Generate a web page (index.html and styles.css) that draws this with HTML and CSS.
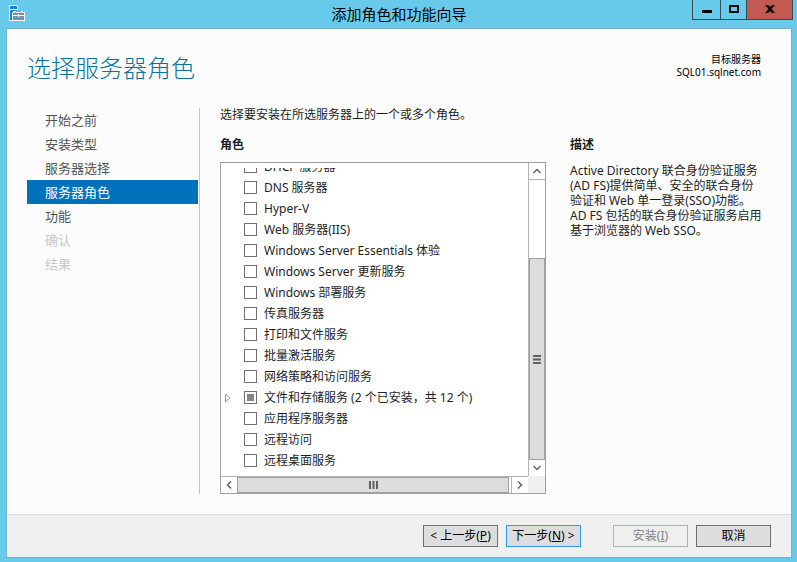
FILE: index.html
```html
<!DOCTYPE html>
<html lang="zh-CN">
<head>
<meta charset="utf-8">
<title>添加角色和功能向导</title>
<link rel="stylesheet" href="styles.css">
</head>
<body>
<div class="window">
  <header class="titlebar">
    <svg class="app-icon" width="16" height="16" viewBox="0 0 16 16" aria-hidden="true">
      <path fill="#fff" d="M0 0h9v6h4l1 1h2v9H0z"/>
      <path fill="#1c83d6" d="M1 1h7v3H1zM1 5h7v1H5L3 8v7H1z"/>
      <path fill="#7890ab" d="M4 8h11v7H4z"/>
      <path fill="none" stroke="#7890ab" d="M6.500 8V7.500l1-1h4l1 1V8"/>
      <path fill="#fff" d="M4 10h5V9h1v1h5v1h-5v1H9v-1H4z"/>
    </svg>
    <h1 class="caption">添加角色和功能向导</h1>
    <div class="window-buttons">
      <button class="win-btn minimize" type="button" aria-label="最小化"><svg width="10" height="10" viewBox="0 0 10 10"><path d="M0 6h10v3H0z"/></svg></button>
      <button class="win-btn maximize" type="button" aria-label="最大化"><svg width="10" height="10" viewBox="0 0 10 10"><path fill="none" stroke="#000" stroke-width="2" d="M1 2h8v6H1z"/></svg></button>
      <button class="win-btn close" type="button" aria-label="关闭"><svg width="10" height="10" viewBox="0 0 10 10"><path d="M0 1h3l2 2 2-2h3L6.500 5 10 9H7L5 7 3 9H0l3.500-4z"/></svg></button>
    </div>
  </header>
  <main class="client">
    <div class="heading">
      <h2 class="page-title">选择服务器角色</h2>
      <p class="target">目标服务器<br>SQL01.sqlnet.com</p>
    </div>
    <div class="content">
      <nav class="steps">
        <a class="step" href="#">开始之前</a>
        <a class="step" href="#">安装类型</a>
        <a class="step" href="#">服务器选择</a>
        <a class="step current" href="#" aria-current="step">服务器角色</a>
        <a class="step" href="#">功能</a>
        <a class="step disabled" aria-disabled="true">确认</a>
        <a class="step disabled" aria-disabled="true">结果</a>
      </nav>
      <section class="roles">
        <p class="intro">选择要安装在所选服务器上的一个或多个角色。</p>
        <h3 class="label">角色</h3>
        <div class="listbox">
          <div class="viewport">
            <div class="rows">
              <label class="row"><input type="checkbox"><span>DHCP 服务器</span></label>
              <label class="row"><input type="checkbox"><span>DNS 服务器</span></label>
              <label class="row"><input type="checkbox"><span>Hyper-V</span></label>
              <label class="row"><input type="checkbox"><span>Web 服务器(IIS)</span></label>
              <label class="row"><input type="checkbox"><span>Windows Server Essentials 体验</span></label>
              <label class="row"><input type="checkbox"><span>Windows Server 更新服务</span></label>
              <label class="row"><input type="checkbox"><span>Windows 部署服务</span></label>
              <label class="row"><input type="checkbox"><span>传真服务器</span></label>
              <label class="row"><input type="checkbox"><span>打印和文件服务</span></label>
              <label class="row"><input type="checkbox"><span>批量激活服务</span></label>
              <label class="row"><input type="checkbox"><span>网络策略和访问服务</span></label>
              <label class="row expandable"><svg width="6" height="10" viewBox="0 0 6 10" aria-hidden="true"><path fill="#fff" stroke="#999" d="M.5 1v8l4.500-4z"/></svg><input class="partial" type="checkbox"><span>文件和存储服务 (2 个已安装，共 12 个)</span></label>
              <label class="row"><input type="checkbox"><span>应用程序服务器</span></label>
              <label class="row"><input type="checkbox"><span>远程访问</span></label>
              <label class="row"><input type="checkbox"><span>远程桌面服务</span></label>
            </div>
          </div>
          <div class="vbar">
            <button class="arrow" type="button" aria-label="向上滚动"><svg width="8" height="6" viewBox="0 0 8 6"><path d="M.5 5L4 1.500 7.500 5"/></svg></button>
            <div class="track"><div class="thumb"><svg width="8" height="9" viewBox="0 0 8 9"><path d="M0 1h8M0 4.500h8M0 8h8"/></svg></div></div>
            <button class="arrow" type="button" aria-label="向下滚动"><svg width="8" height="6" viewBox="0 0 8 6"><path d="M.5 1L4 4.500 7.500 1"/></svg></button>
          </div>
          <div class="hbar">
            <button class="arrow" type="button" aria-label="向左滚动"><svg width="6" height="8" viewBox="0 0 6 8"><path d="M5 .5L1.500 4 5 7.500"/></svg></button>
            <div class="track"><div class="thumb"><svg width="9" height="8" viewBox="0 0 9 8"><path d="M1 0v8M4.500 0v8M8 0v8"/></svg></div></div>
            <button class="arrow" type="button" aria-label="向右滚动"><svg width="6" height="8" viewBox="0 0 6 8"><path d="M1 .5L4.500 4 1 7.500"/></svg></button>
          </div>
          <div class="corner"></div>
        </div>
      </section>
      <section class="description">
        <h3 class="label">描述</h3>
        <p class="text">Active Directory 联合身份验证服务<br>(AD FS)提供简单、安全的联合身份<br>验证和 Web 单一登录(SSO)功能。<br>AD FS 包括的联合身份验证服务启用<br>基于浏览器的 Web SSO。</p>
      </section>
    </div>
    <footer class="footer">
      <button class="btn" type="button">&lt; 上一步(<u>P</u>)</button>
      <button class="btn primary" type="button">下一步(<u>N</u>) &gt;</button>
      <button class="btn install" type="button" disabled>安装(<u>I</u>)</button>
      <button class="btn" type="button">取消</button>
    </footer>
  </main>
</div>
</body>
</html>
```
FILE: styles.css
```css
* { box-sizing: border-box; }

body {
  margin: 0;
  font: 12px/14px "Noto Sans", "Noto Sans CJK SC", sans-serif;
  color: #1e1e1e;
  background: #68caea;
}

h1, h2, h3, p { margin: 0; font-size: 12px; font-weight: 400; }
button { font: inherit; padding: 0; }
svg { display: block; flex: none; }

.window {
  display: flex;
  flex-direction: column;
  min-height: 100vh;
  padding: 0 5px 4px 6px;
}

.titlebar {
  display: grid;
  grid-template-columns: 101px 1fr 101px;
  height: 28px;
}
.app-icon { margin: 5px 0 0 3px; }
.caption {
  font-size: 15px;
  line-height: 28px;
  text-align: center;
  color: #000;
}
.window-buttons { display: flex; height: 20px; margin: 0 -1px 0 1px; }
.win-btn {
  display: flex;
  align-items: center;
  justify-content: center;
  width: 28px;
  height: 20px;
  padding-bottom: 2px;
  border: 1px solid #3c4a50;
  border-top: 0;
  border-left: 0;
  background: #68caea;
}
.minimize { width: 29px; border-left: 1px solid #3c4a50; }
.maximize { width: 26px; }
.close { flex: 1; background: #c35a52; }

.client {
  display: flex;
  flex-direction: column;
  flex: 1;
  border: 1px solid #74b3cc;
  background: #fcfcfc;
}

.heading {
  display: flex;
  justify-content: space-between;
  padding: 24px 30px 0 20px;
  height: 79px;
}
.page-title {
  font-size: 24px;
  font-weight: 300;
  line-height: 30px;
  color: #0b7397;
}
.target { font-size: 10px; line-height: 13px; text-align: right; color: #000; }

.content {
  display: grid;
  grid-template-columns: 173px 1fr 201px;
  flex: 1;
  padding: 0 20px 20px;
}

.steps { border-right: 1px solid #c5c5c5; }
.step {
  display: block;
  height: 24px;
  margin-right: 1px;
  padding-left: 18px;
  font-size: 13px;
  line-height: 24px;
  color: #555;
  text-decoration: none;
}
.step.current { background: #0072bc; color: #fff; }
.step.disabled { color: #c8c8c8; }

.roles { display: flex; flex-direction: column; margin: 0 24px 0 20px; }
.label { font-weight: 700; }
.intro { margin-bottom: 16px; }
.roles .label { margin-bottom: 10px; }

.listbox {
  display: grid;
  grid-template-columns: 1fr 17px;
  grid-template-rows: 1fr 17px;
  flex: 1;
  border: 1px solid #a0a0a0;
  background: #fff;
}
.viewport { margin-top: 5px; height: 308px; overflow: hidden; }
.rows { margin-top: -12px; }
.row {
  display: flex;
  align-items: center;
  gap: 7px;
  height: 21px;
  padding-left: 23px;
  white-space: nowrap;
}
.expandable { padding-left: 4px; }
.expandable svg { margin-right: 6px; }
.row input {
  appearance: none;
  width: 13px;
  height: 13px;
  margin: 0;
  border: 1px solid #707070;
  background: #fff;
}
.row .partial { background: #868686; box-shadow: inset 0 0 0 2px #fff; }

.vbar, .hbar { display: flex; background: #fff; }
.vbar { flex-direction: column; border-left: 1px solid #b4b4b4; }
.hbar { border-top: 1px solid #b4b4b4; }
.arrow {
  display: flex;
  align-items: center;
  justify-content: center;
  flex: none;
  width: 16px;
  height: 16px;
  border: 0;
  background: #fff;
}
.arrow path { fill: none; stroke: #606060; stroke-width: 1.500; }
.vbar .arrow:first-child { border-bottom: 1px solid #b4b4b4; height: 17px; }
.hbar .arrow:last-child { border-left: 1px solid #b4b4b4; width: 17px; }
.track { display: flex; flex: 1; }
.thumb {
  display: flex;
  align-items: center;
  justify-content: center;
  flex: 1;
  border: 1px solid #a0a0a0;
  background: #dcdcdc;
}
.thumb path { fill: none; stroke: #606060; stroke-width: 2; }
.vbar .track { padding-top: 78px; }
.hbar .track { padding-right: 2px; }
.corner { background: #f0f0f0; }

.description .label { margin: 30px 0 11px; }
.text { line-height: 15px; white-space: nowrap; }

.footer {
  display: flex;
  justify-content: flex-end;
  gap: 8px;
  padding: 10px 20px;
  border-top: 1px solid #dcdcdc;
  background: #f0f0f0;
}
.btn {
  width: 75px;
  height: 22px;
  border: 1px solid #707070;
  background: #dddddd;
  color: #000;
  line-height: 20px;
  white-space: nowrap;
}
.primary { border-color: #3399ff; }
.install { margin-left: 24px; }
.btn:disabled { border-color: #adb2b5; background: #efefef; color: #838383; }
```
